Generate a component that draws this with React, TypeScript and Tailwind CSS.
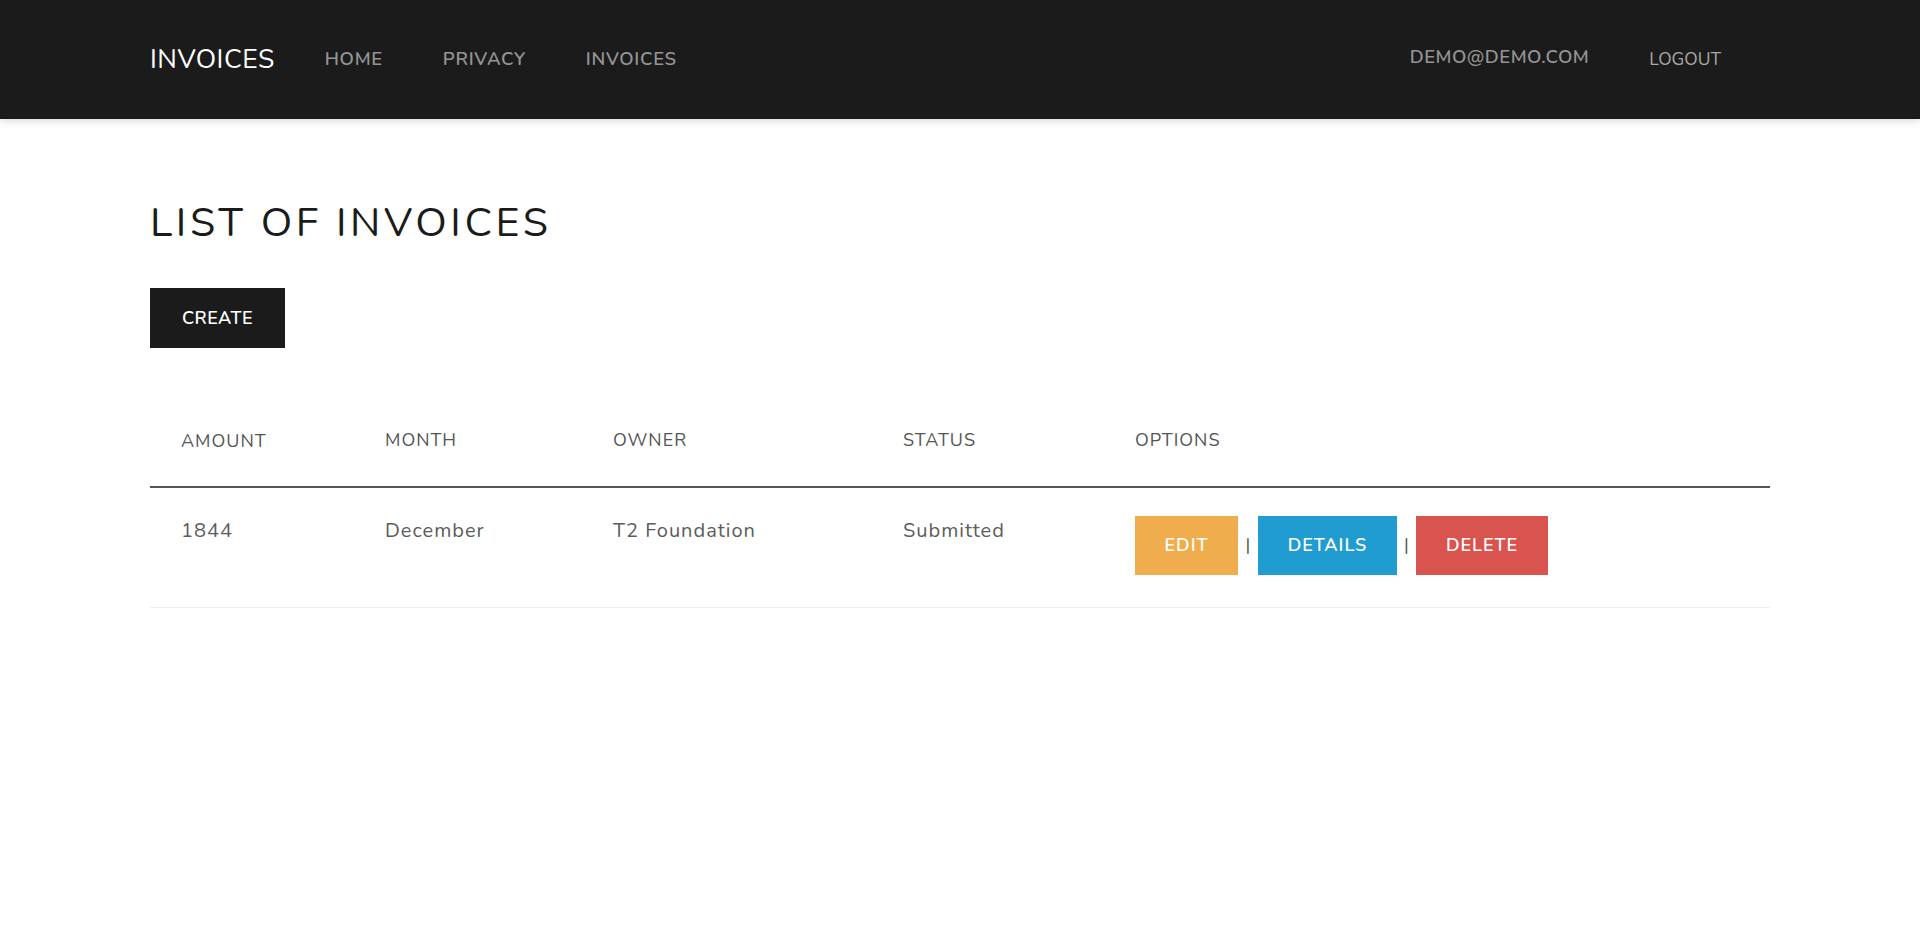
import React from 'react';

const invoices = [
  { amount: 1844, month: 'December', owner: 'T2 Foundation', status: 'Submitted' },
];

const navLinks = ['Home', 'Privacy', 'Invoices'];

const App = () => {
  return (
    <div className="min-h-screen bg-white" style={{ fontFamily: 'Nunito, Lato, "Noto Sans", sans-serif' }}>
      <nav className="bg-[#1b1b1b] h-[119px] shadow-[0_2px_8px_rgba(0,0,0,0.15)]">
        <div className="mx-[150px] h-full flex items-center">
          <a className="text-white text-[26.5px] tracking-[0.5px] uppercase mr-[50px]">Invoices</a>
          <ul className="flex items-center gap-[60px]">
            {navLinks.map((link) => (
              <li key={link} className="text-[#959595] text-[18.5px] font-semibold uppercase tracking-[0.7px]">
                {link}
              </li>
            ))}
          </ul>
          <div className="ml-auto flex items-center gap-[60px] mr-[49px]">
            <span className="text-[#959595] text-[18.5px] font-semibold uppercase tracking-[0.5px] -mt-[3px]">
              demo@demo.com
            </span>
            <span className="text-[#aaaaaa] text-[17.5px] uppercase">Logout</span>
          </div>
        </div>
      </nav>

      <main className="mx-[150px] pt-[76px]">
        <h1 className="text-[41px] leading-[56px] tracking-[3.6px] text-[#1b1b1b] uppercase">List of Invoices</h1>

        <button className="mt-[37px] h-[60px] w-[135px] bg-[#1b1b1b] text-white text-[18px] font-semibold uppercase tracking-[0.5px]">
          Create
        </button>

        <table className="mt-[45px] w-full border-collapse text-left">
          <thead>
            <tr className="border-b-2 border-[#555555]">
              <th className="w-[205px] pl-[31px] pt-[36px] pb-[33px] text-[18px] leading-[24px] font-normal uppercase tracking-[1px] text-[#555555]">Amount</th>
              <th className="w-[228px] pl-[30px] text-[18px] leading-[24px] font-normal uppercase tracking-[1px] text-[#555555]">Month</th>
              <th className="w-[290px] pl-[30px] text-[18px] leading-[24px] font-normal uppercase tracking-[1px] text-[#555555]">Owner</th>
              <th className="w-[232px] pl-[30px] text-[18px] leading-[24px] font-normal uppercase tracking-[1px] text-[#555555]">Status</th>
              <th className="pl-[30px] text-[18px] leading-[24px] font-normal uppercase tracking-[1px] text-[#555555]">Options</th>
            </tr>
          </thead>
          <tbody>
            {invoices.map((inv, i) => (
              <tr key={i} className="border-b border-[#eeeeee] align-top">
                <td className="pl-[31px] pt-[28px] text-[20px] leading-[30px] tracking-[1px] text-[#5c5c5c]">{inv.amount}</td>
                <td className="pl-[30px] pt-[28px] text-[20px] leading-[30px] tracking-[1px] text-[#5c5c5c]">{inv.month}</td>
                <td className="pl-[30px] pt-[28px] text-[20px] leading-[30px] tracking-[1px] text-[#5c5c5c]">{inv.owner}</td>
                <td className="pl-[30px] pt-[28px] text-[20px] leading-[30px] tracking-[1px] text-[#5c5c5c]">{inv.status}</td>
                <td className="pl-[30px] pt-[28px] pb-[32px]">
                  <div className="flex items-center text-[#555555] text-[18px]">
                    <button className="h-[59px] w-[103px] bg-[#f0ad4e] text-white text-[18px] font-semibold uppercase tracking-[1px]">Edit</button>
                    <span className="w-[20px] text-center">|</span>
                    <button className="h-[59px] w-[139px] bg-[#209cd0] text-white text-[18px] font-semibold uppercase tracking-[1px]">Details</button>
                    <span className="w-[19px] text-center">|</span>
                    <button className="h-[59px] w-[132px] bg-[#d9534f] text-white text-[18px] font-semibold uppercase tracking-[1px]">Delete</button>
                  </div>
                </td>
              </tr>
            ))}
          </tbody>
        </table>
      </main>
    </div>
  );
};

export default App;
